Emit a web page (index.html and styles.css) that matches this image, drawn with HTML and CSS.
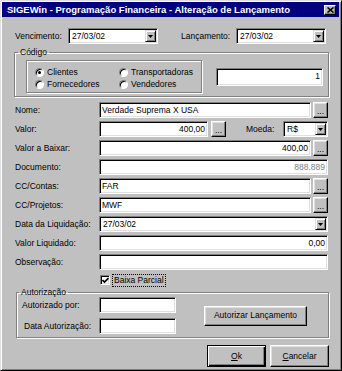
FILE: index.html
```html
<!DOCTYPE html>
<html>
<head>
    <meta charset="utf-8">
    <link rel="stylesheet" href="styles.css">
</head>
<body>
    <div class="window">
        <div class="titlebar">
            <span class="title">SIGEWin - Programação Financeira - Alteração de Lançamento</span>
            <span class="close-btn">
                <svg width="7" height="6" viewBox="0 0 7 6"><path d="M0.5 0.5L6.5 5.5M6.5 0.5L0.5 5.5" stroke="#000" stroke-width="1.6" fill="none"/></svg>
            </span>
        </div>
        <div class="content">
            <div class="top-row">
                <span class="lbl lbl-venc">Vencimento:</span>
                <div class="combo combo-date">
                    <span class="combo-text">27/03/02</span>
                    <span class="drop-btn"><svg width="5" height="3" viewBox="0 0 5 3"><path d="M0 0H5L2.5 3Z" fill="#000"/></svg></span>
                </div>
                <span class="lbl lbl-lanc">Lançamento:</span>
                <div class="combo combo-date">
                    <span class="combo-text">27/03/02</span>
                    <span class="drop-btn"><svg width="5" height="3" viewBox="0 0 5 3"><path d="M0 0H5L2.5 3Z" fill="#000"/></svg></span>
                </div>
            </div>

            <fieldset class="group group-codigo">
                <legend>Código</legend>
                <div class="group-body">
                    <div class="radio-panel">
                        <label class="radio-item"><span class="radio checked"></span>Clientes</label>
                        <label class="radio-item"><span class="radio"></span>Transportadoras</label>
                        <label class="radio-item"><span class="radio"></span>Fornecedores</label>
                        <label class="radio-item"><span class="radio"></span>Vendedores</label>
                    </div>
                    <div class="field field-codigo right">1</div>
                </div>
            </fieldset>

            <div class="form-rows">
                <div class="form-row">
                    <span class="lbl">Nome:</span>
                    <div class="field">Verdade Suprema X USA</div>
                    <span class="dots-btn">...</span>
                </div>
                <div class="form-row">
                    <span class="lbl">Valor:</span>
                    <div class="field field-valor right">400,00</div>
                    <span class="dots-btn dots-valor">...</span>
                    <span class="lbl-moeda">Moeda:</span>
                    <div class="combo combo-moeda">
                        <span class="combo-text">R$</span>
                        <span class="drop-btn"><svg width="5" height="3" viewBox="0 0 5 3"><path d="M0 0H5L2.5 3Z" fill="#000"/></svg></span>
                    </div>
                </div>
                <div class="form-row">
                    <span class="lbl">Valor a Baixar:</span>
                    <div class="field right">400,00</div>
                    <span class="dots-btn">...</span>
                </div>
                <div class="form-row">
                    <span class="lbl">Documento:</span>
                    <div class="field right muted">888.889</div>
                </div>
                <div class="form-row">
                    <span class="lbl">CC/Contas:</span>
                    <div class="field">FAR</div>
                    <span class="dots-btn">...</span>
                </div>
                <div class="form-row">
                    <span class="lbl">CC/Projetos:</span>
                    <div class="field">MWF</div>
                    <span class="dots-btn">...</span>
                </div>
                <div class="form-row">
                    <span class="lbl">Data da Liquidação:</span>
                    <div class="combo combo-full">
                        <span class="combo-text">27/03/02</span>
                        <span class="drop-btn"><svg width="5" height="3" viewBox="0 0 5 3"><path d="M0 0H5L2.5 3Z" fill="#000"/></svg></span>
                    </div>
                </div>
                <div class="form-row">
                    <span class="lbl">Valor Liquidado:</span>
                    <div class="field right">0,00</div>
                </div>
                <div class="form-row">
                    <span class="lbl">Observação:</span>
                    <div class="field"></div>
                </div>
            </div>

            <div class="check-row">
                <span class="checkbox">
                    <svg width="7" height="7" viewBox="0 0 7 7"><path d="M0.5 3L2.5 5L6.5 1" stroke="#000" stroke-width="1.7" fill="none"/></svg>
                </span>
                <span class="focus-label">Baixa Parcial</span>
            </div>

            <fieldset class="group group-autoriz">
                <legend>Autorização</legend>
                <div class="group-body">
                    <div class="auth-rows">
                        <div class="auth-row">
                            <span class="lbl auth-lbl">Autorizado por:</span>
                            <div class="field field-auth"></div>
                        </div>
                        <div class="auth-row">
                            <span class="lbl auth-lbl auth-lbl-data">Data Autorização:</span>
                            <div class="field field-auth"></div>
                        </div>
                    </div>
                    <div class="btn btn-autorizar">Autorizar Lançamento</div>
                </div>
            </fieldset>

            <div class="dialog-buttons">
                <div class="btn btn-dialog btn-default"><u>O</u>k</div>
                <div class="btn btn-dialog"><u>C</u>ancelar</div>
            </div>
        </div>
    </div>
</body>
</html>
```

FILE: styles.css
```css
  * {
      box-sizing: border-box;
  }
  body {
      margin: 0;
      background-color: #C0C0C0;
      font-family: "Liberation Sans", Arial, sans-serif;
      font-size: 8.5px;
      line-height: 11px;
      color: #000;
  }
  .window {
      width: 342px;
      height: 371px;
      border: 1px solid;
      border-color: #DFDFDF #000 #000 #DFDFDF;
      box-shadow: inset 1px 1px #FFF, inset -1px -1px #808080;
      padding: 1px 2px 2px 1px;
      background-color: #C0C0C0;
  }
  .titlebar {
      height: 15px;
      background-color: #000080;
      display: flex;
      align-items: center;
      justify-content: space-between;
      padding: 0 3px 0 5px;
  }
  .title {
      color: #FFF;
      font-weight: bold;
      font-size: 9.5px;
      white-space: nowrap;
  }
  .close-btn {
      width: 12px;
      height: 10px;
      background-color: #C0C0C0;
      border: 1px solid;
      border-color: #FFF #000 #000 #FFF;
      box-shadow: inset -1px -1px #808080;
      display: flex;
      align-items: center;
      justify-content: center;
  }
  .content {
      padding: 11px 11px 0 13px;
  }
  .lbl {
      white-space: nowrap;
  }

  /* sunken white boxes */
  .field, .combo {
      height: 16px;
      background-color: #FFF;
      border: 1px solid;
      border-color: #808080 #FFF #FFF #808080;
      box-shadow: inset 1px 1px #000, inset -1px -1px #DFDFDF;
      display: flex;
      align-items: center;
      white-space: nowrap;
      overflow: hidden;
  }
  .field {
      padding: 1px 2px;
  }
  .combo {
      padding: 1px;
  }
  .right {
      justify-content: flex-end;
  }
  .muted {
      color: #808080;
  }
  .combo-text {
      flex: 1;
      padding-left: 2px;
  }
  .drop-btn {
      width: 11px;
      height: 12px;
      background-color: #C0C0C0;
      border: 1px solid;
      border-color: #DFDFDF #000 #000 #DFDFDF;
      box-shadow: inset 1px 1px #FFF, inset -1px -1px #808080;
      display: flex;
      align-items: center;
      justify-content: center;
  }

  .top-row {
      display: flex;
      align-items: center;
      height: 16px;
  }
  .lbl-venc {
      width: 53px;
  }
  .combo-date {
      width: 90px;
  }
  .lbl-lanc {
      margin-left: 23px;
      width: 55px;
  }

  /* etched group boxes */
  .group {
      border: 1px solid #808080;
      box-shadow: inset 1px 1px #FFF, 1px 1px #FFF;
      min-width: 0;
  }
  .group legend {
      padding: 0 2px;
      line-height: 10px;
  }
  .group-body {
      display: flex;
      align-items: center;
  }
  .group-codigo {
      margin: 3px -1px 0;
      padding: 3px 5px 3px 3px;
  }
  .radio-panel {
      width: 177px;
      height: 33px;
      margin-left: 8px;
      border: 1px solid #808080;
      box-shadow: inset 1px 1px #FFF, 1px 1px #FFF;
      display: grid;
      grid-template-columns: 84px 1fr;
      grid-auto-rows: 12px;
      padding: 5px 0 0 8px;
  }
  .radio-item {
      display: flex;
      align-items: center;
      white-space: nowrap;
  }
  .radio {
      width: 9px;
      height: 9px;
      border-radius: 50%;
      background-color: #FFF;
      border: 1px solid;
      border-color: #808080 #FFF #FFF #808080;
      box-shadow: inset 1px 1px #000;
      margin-right: 3px;
      display: flex;
      align-items: center;
      justify-content: center;
  }
  .radio.checked::after {
      content: "";
      width: 3px;
      height: 3px;
      border-radius: 50%;
      background-color: #000;
  }
  .field-codigo {
      width: 107px;
      height: 18px;
      margin-left: 14px;
  }

  .form-rows {
      display: flex;
      flex-direction: column;
      gap: 3px;
      margin-top: 5px;
  }
  .form-row {
      display: flex;
      align-items: center;
      height: 16px;
  }
  .form-row .lbl {
      width: 84px;
  }
  .form-row .field, .combo-full, .combo-moeda {
      flex: 1;
  }
  .form-row .field-valor {
      flex: none;
      width: 109px;
  }
  .dots-btn {
      width: 15px;
      height: 16px;
      margin-left: 2px;
      background-color: #C0C0C0;
      border: 1px solid;
      border-color: #FFF #000 #000 #FFF;
      box-shadow: inset -1px -1px #808080, inset 1px 1px #DFDFDF;
      display: flex;
      align-items: flex-end;
      justify-content: center;
      line-height: 9px;
      padding-bottom: 1px;
  }
  .dots-valor {
      margin-left: 3px;
  }
  .lbl-moeda {
      margin-left: 20px;
      width: 37px;
  }

  .check-row {
      display: flex;
      align-items: center;
      height: 14px;
      margin-top: 3px;
      padding-left: 85px;
  }
  .checkbox {
      width: 10px;
      height: 10px;
      background-color: #FFF;
      border: 1px solid;
      border-color: #808080 #FFF #FFF #808080;
      box-shadow: inset 1px 1px #000, inset -1px -1px #DFDFDF;
      display: flex;
      align-items: center;
      justify-content: center;
  }
  .focus-label {
      margin-left: 2px;
      border: 1px dotted #000;
      padding: 0 1px;
  }

  .group-autoriz {
      margin: 0 -1px 0 1px;
      padding: 0 5px 3px 2px;
  }
  .auth-rows {
      display: flex;
      flex-direction: column;
      gap: 5px;
  }
  .auth-row {
      display: flex;
      align-items: center;
      height: 16px;
  }
  .auth-lbl {
      width: 80px;
      padding-left: 3px;
  }
  .auth-lbl-data {
      padding-left: 5px;
  }
  .field-auth {
      width: 77px;
  }

  /* raised buttons */
  .btn {
      background-color: #C0C0C0;
      border: 1px solid;
      border-color: #FFF #000 #000 #FFF;
      box-shadow: inset -1px -1px #808080, inset 1px 1px #DFDFDF;
      display: flex;
      align-items: center;
      justify-content: center;
      white-space: nowrap;
  }
  .btn-autorizar {
      width: 103px;
      height: 20px;
      margin-left: 28px;
  }
  .dialog-buttons {
      display: flex;
      justify-content: flex-end;
      gap: 4px;
      margin-top: 7px;
      margin-right: -1px;
  }
  .btn-dialog {
      width: 59px;
      height: 22px;
  }
  .btn-default {
      border-color: #000;
      box-shadow: inset 1px 1px #FFF, inset -1px -1px #000, inset -2px -2px #808080;
  }
```
